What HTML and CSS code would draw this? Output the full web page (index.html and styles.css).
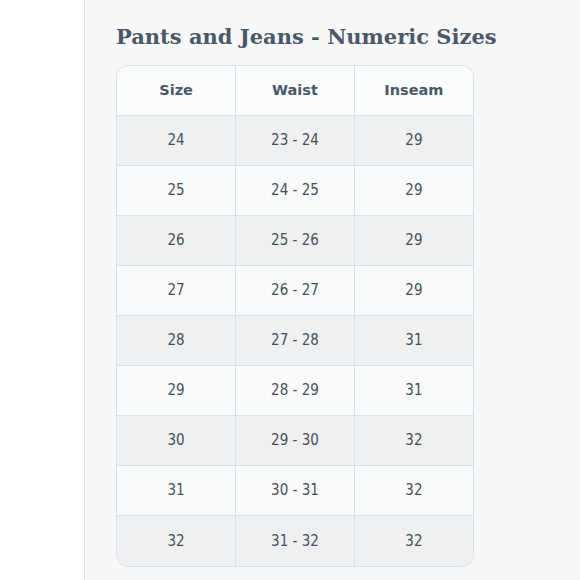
FILE: index.html
```html
<!DOCTYPE html>
<html>
<head>
<meta charset="utf-8">
<link rel="stylesheet" href="styles.css">
</head>
<body>
<div class="page">
  <div class="gutter"></div>
  <main class="panel">
    <h1 class="title">Pants and Jeans - Numeric Sizes</h1>
    <div class="table-wrap">
      <table class="sizes">
        <thead>
          <tr><th>Size</th><th>Waist</th><th>Inseam</th></tr>
        </thead>
        <tbody>
          <tr><td>24</td><td>23 - 24</td><td>29</td></tr>
          <tr><td>25</td><td>24 - 25</td><td>29</td></tr>
          <tr><td>26</td><td>25 - 26</td><td>29</td></tr>
          <tr><td>27</td><td>26 - 27</td><td>29</td></tr>
          <tr><td>28</td><td>27 - 28</td><td>31</td></tr>
          <tr><td>29</td><td>28 - 29</td><td>31</td></tr>
          <tr><td>30</td><td>29 - 30</td><td>32</td></tr>
          <tr><td>31</td><td>30 - 31</td><td>32</td></tr>
          <tr><td>32</td><td>31 - 32</td><td>32</td></tr>
        </tbody>
      </table>
    </div>
  </main>
</div>
</body>
</html>
```

FILE: styles.css
```css
html, body {
  margin: 0;
  padding: 0;
  background: #ffffff;
}
.page {
  display: flex;
  width: 580px;
  height: 580px;
  overflow: hidden;
}
.gutter {
  width: 84px;
  flex: none;
  background: #ffffff;
  border-right: 1px solid #e3e6e9;
}
.panel {
  flex: 1;
  background: #f7f8fa;
  padding: 21px 0 0 31px;
}
.title {
  margin: 0 0 12px 0;
  font-family: "DejaVu Serif", Georgia, serif;
  font-weight: bold;
  font-size: 21px;
  line-height: 32px;
  color: #4a5867;
  white-space: nowrap;
}
.table-wrap {
  width: 356px;
  border: 1px solid #dcdfe3;
  border-radius: 12px;
  overflow: hidden;
}
.sizes {
  width: 100%;
  border-collapse: collapse;
  table-layout: fixed;
  font-family: "DejaVu Sans Condensed", "DejaVu Sans", Tahoma, sans-serif;
  font-size: 15px;
  color: #4a4f56;
}
.sizes th, .sizes td {
  height: 50px;
  padding: 0;
  text-align: center;
  border-right: 1px solid #dcdfe3;
  border-bottom: 1px solid #dcdfe3;
  box-sizing: border-box;
}
.sizes th:last-child, .sizes td:last-child {
  border-right: none;
}
.sizes tbody tr:last-child td {
  border-bottom: none;
  height: 51px;
}
.sizes th {
  height: 49px;
  font-family: "DejaVu Sans", Verdana, sans-serif;
  font-size: 14.5px;
  font-weight: bold;
  color: #4a5867;
  background: #fbfcfd;
}
.sizes tbody tr:nth-child(odd) td {
  background: #eef0f2;
}
.sizes tbody tr:nth-child(even) td {
  background: #f9fafb;
}
```
